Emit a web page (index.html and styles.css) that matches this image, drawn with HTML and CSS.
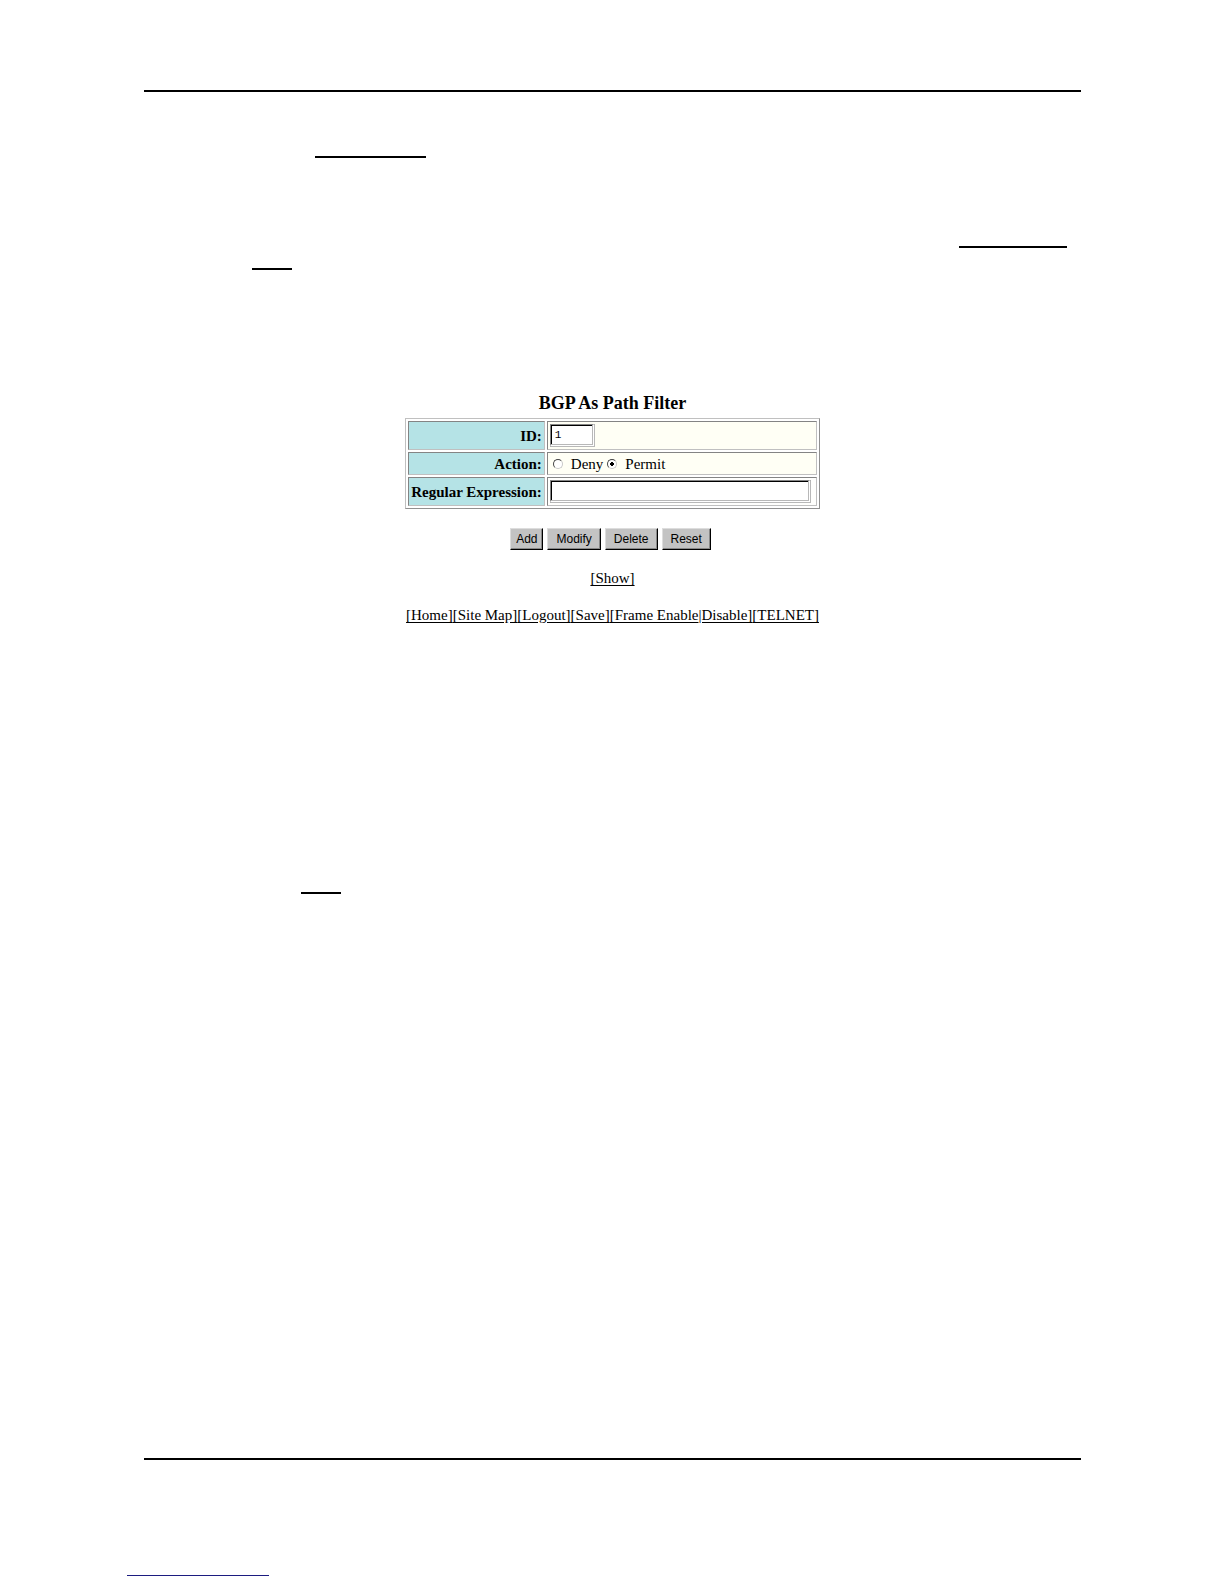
FILE: index.html
```html
<!DOCTYPE html>
<html lang="en">
<head>
    <meta charset="UTF-8">
    <meta name="viewport" content="width=device-width, initial-scale=1.0">
    <title>BGP As Path Filter</title>
    <link rel="stylesheet" href="styles.css">
</head>
<body>
    <div class="page">
        <hr class="rule">

        <div class="intro">
            <div class="line line-first"></div>
            <div class="line line-right"></div>
            <div class="line line-left"></div>
        </div>

        <form class="filter">
            <h1 class="title">BGP As Path Filter</h1>
            <table class="fields">
                <tr>
                    <th><label for="filterId">ID:</label></th>
                    <td><input type="text" class="text-box id-box" id="filterId" value="1"></td>
                </tr>
                <tr>
                    <th>Action:</th>
                    <td>
                        <div class="choices">
                            <label><input type="radio" name="action" value="deny">Deny</label>
                            <label><input type="radio" name="action" value="permit" checked>Permit</label>
                        </div>
                    </td>
                </tr>
                <tr>
                    <th><label for="regex">Regular Expression:</label></th>
                    <td class="plain"><input type="text" class="text-box regex-box" id="regex"></td>
                </tr>
            </table>

            <div class="buttons">
                <button type="button" class="btn btn-small">Add</button>
                <button type="button" class="btn">Modify</button>
                <button type="button" class="btn">Delete</button>
                <button type="reset" class="btn">Reset</button>
            </div>
        </form>

        <p class="links links-show"><a href="#">[Show]</a></p>
        <p class="links"><a href="#">[Home]</a><a href="#">[Site Map]</a><a href="#">[Logout]</a><a href="#">[Save]</a><a href="#">[Frame Enable</a><a href="#">|Disable]</a><a href="#">[TELNET]</a></p>

        <div class="line line-note"></div>

        <footer class="footer">
            <hr class="rule">
            <div class="footer-line"></div>
        </footer>
    </div>
</body>
</html>
```

FILE: styles.css
```css
* {
    margin: 0;
    padding: 0;
    box-sizing: border-box;
}

body {
    font-family: "Liberation Serif", "Times New Roman", serif;
    font-size: 15px;
    line-height: 20px;
    color: #000;
    background: white;
}

.page {
    display: flex;
    flex-direction: column;
    min-height: 100vh;
    padding: 90px 143px 8px 144px;
}

.rule {
    border: none;
    height: 2px;
    background: #000;
}

.intro {
    display: flex;
    flex-direction: column;
    padding: 64px 14px 0 108px;
}

.line {
    width: 40px;
    height: 2px;
    background: #000;
}

.line-first {
    width: 111px;
    margin-left: 63px;
}

.line-right {
    width: 108px;
    margin-top: 88px;
    align-self: flex-end;
}

.line-left {
    margin-top: 20px;
}

.line-note {
    margin: 267px 0 0 157px;
}

.filter {
    display: flex;
    flex-direction: column;
    align-items: center;
    margin-top: 123px;
}

.title {
    font-size: 18px;
    line-height: 20px;
    margin-bottom: 5px;
}

.fields {
    border: 1px solid;
    border-color: #c0c0c0 #909090 #909090 #c0c0c0;
    border-collapse: separate;
    border-spacing: 2px;
}

.fields th,
.fields td {
    border: 1px solid;
    border-color: #848484 #c0c0c0 #c0c0c0 #848484;
    padding: 0 2px;
    vertical-align: middle;
}

.fields th {
    background: #b5e3e6;
    text-align: right;
    white-space: nowrap;
}

.fields td {
    width: 270px;
    height: 23px;
    background: #fffff5;
}

.fields td.plain {
    background: #fffffd;
}

.text-box {
    display: block;
    height: 23px;
    margin: 2px 0;
    padding: 0 4px;
    border: 1px solid #858585;
    border-right: 3px double #b8b8b8;
    border-bottom: 3px double #b8b8b8;
    box-shadow: inset 1px 1px 0 #000;
    background: white;
    font-family: "Liberation Mono", monospace;
    font-size: 11px;
}

.id-box {
    width: 45px;
}

.regex-box {
    width: 261px;
}

.choices {
    display: flex;
    gap: 4px;
}

.choices label {
    display: flex;
    align-items: center;
    gap: 8px;
}

.choices input {
    appearance: none;
    width: 10px;
    height: 10px;
    margin-left: 3px;
    border: 1px solid;
    border-color: #444 #c8c8c8 #c8c8c8 #444;
    border-radius: 50%;
    background: white;
}

.choices label + label input {
    margin-left: 0;
}

.choices input:checked {
    background: radial-gradient(circle, #000 2px, white 2px);
}

.buttons {
    display: flex;
    gap: 4px;
    margin-top: 19px;
    padding-right: 4px;
}

.btn {
    height: 22px;
    padding: 0 8px;
    border: 1px solid;
    border-color: #ddd #000 #000 #ddd;
    box-shadow: inset -1px -1px 0 #888;
    background: #c3c3c3;
    color: #000;
    font-family: "Liberation Sans", Arial, sans-serif;
    font-size: 12px;
}

.btn-small {
    padding: 0 5px;
}

.links {
    margin-top: 17px;
    text-align: center;
}

.links-show {
    margin-top: 18px;
}

.links a {
    color: #000;
    text-underline-offset: 2px;
}

.footer {
    margin-top: auto;
}

/* starts a little left of the text column */
.footer-line {
    width: 142px;
    height: 1px;
    margin: 115px 0 0 -17px;
    background: #1c1c80;
}
```
